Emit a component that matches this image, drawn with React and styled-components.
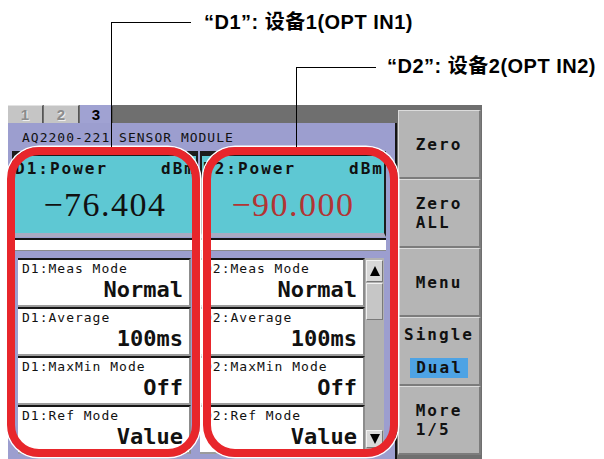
import React from "react";
import styled, { createGlobalStyle } from "styled-components";

const GlobalStyle = createGlobalStyle`
  html, body {
    margin: 0;
    padding: 0;
    background: #ffffff;
  }
  body {
    font-family: "Liberation Sans", Arial, sans-serif;
  }
  * {
    box-sizing: border-box;
  }
`;

const MONO = `"DejaVu Sans Mono", "Liberation Mono", monospace`;

const Figure = styled.div`
  position: relative;
  width: 604px;
  height: 459px;
  overflow: hidden;
  padding: 105px 0 0 8px;
`;

const Screen = styled.div`
  display: flex;
  gap: 1px;
  width: 474px;
  height: 354px;
  background: #6f6f6f;
`;

const MainPane = styled.div`
  width: 389px;
  display: flex;
  flex-direction: column;
`;

const TabBar = styled.div`
  display: flex;
  gap: 1px;
  height: 18px;
  background: #6f6f6f;
`;

const Tab = styled.div`
  width: ${({ $w }) => $w}px;
  height: 18px;
  display: flex;
  align-items: center;
  justify-content: center;
  font: bold 15px "Liberation Sans", Arial, sans-serif;
  background: ${({ $active }) => ($active ? "#a0a2d2" : "#c5c5c5")};
  color: ${({ $active }) => ($active ? "#000" : "#8c8c8c")};
  text-shadow: ${({ $active }) => ($active ? "none" : "1px 1px 0 #eeeeee")};
  border-top: 1px solid ${({ $active }) => ($active ? "#a0a2d2" : "#e2e2e2")};
  border-right: 1px solid #555;
`;

const Body = styled.div`
  flex: 1;
  background: #9c9ecf;
  border-right: 2px solid #141414;
  display: flex;
  flex-direction: column;
`;

const ModuleTitle = styled.div`
  height: 27px;
  padding: 8px 0 0 14px;
  font-family: ${MONO};
  font-size: 13px;
  line-height: 13px;
  letter-spacing: 1px;
  color: #111;
`;

const Columns = styled.div`
  display: flex;
  gap: 2px;
  padding-left: 4px;
`;

const Column = styled.div`
  width: 186px;
  display: flex;
  flex-direction: column;
`;

const Display = styled.div`
  height: 86px;
  margin-top: 1px;
  background: #5ec8d3;
  border-top: 5px solid #1c1c1c;
  border-left: 2px solid #1c1c1c;
  border-right: 2px solid #1c1c1c;
  border-bottom: 4px solid #a9aac2;
  display: flex;
  flex-direction: column;
`;

const PowerRow = styled.div`
  display: flex;
  justify-content: space-between;
  padding: 4px 0 0 1px;
  font-family: ${MONO};
  font-weight: bold;
  font-size: 16px;
  line-height: 18px;
  letter-spacing: 2px;
  color: #111;
`;

const PowerValue = styled.div`
  margin-top: 10px;
  text-align: center;
  font-family: "Liberation Serif", "Times New Roman", serif;
  font-size: 34px;
  line-height: 34px;
  letter-spacing: 1.5px;
  color: ${({ $color }) => $color};
`;

const SlotBar = styled.div`
  height: 13px;
  margin-top: 1px;
  background: #ffffff;
  border-top: 2px solid #161616;
  border-bottom: 1px solid #8a8a8a;
`;

const ListRow = styled.div`
  display: flex;
  margin-top: 7px;
  padding: 0 ${({ $padRight }) => $padRight}px 0 ${({ $padLeft }) => $padLeft}px;
`;

const ItemStack = styled.div`
  flex: 1;
  display: flex;
  flex-direction: column;
`;

const Item = styled.div`
  height: 49px;
  background: #ffffff;
  border-top: 2px solid #161616;
  border-bottom: 2px solid #9c9c9c;
  border-right: 2px solid #8c8c8c;
  padding: 2px 6px 0 4px;
  display: flex;
  flex-direction: column;
`;

const ItemLabel = styled.div`
  font-family: ${MONO};
  font-size: 13px;
  line-height: 13px;
  letter-spacing: 1px;
  color: #111;
  white-space: nowrap;
`;

const ItemValue = styled.div`
  margin-top: 4px;
  text-align: right;
  font-family: ${MONO};
  font-weight: bold;
  font-size: 22px;
  line-height: 22px;
  color: #111;
`;

const Scrollbar = styled.div`
  width: 19px;
  height: 192px;
  background: #b2b2b2;
  padding: 2px 1px;
  display: flex;
  flex-direction: column;
`;

const ScrollButton = styled.div`
  height: ${({ $h }) => $h}px;
  background: #d8d8d8;
  border-top: 1px solid #f2f2f2;
  border-left: 1px solid #f2f2f2;
  border-bottom: 1px solid #777;
  border-right: 1px solid #777;
  display: flex;
  align-items: center;
  justify-content: center;
`;

const Arrow = styled.span`
  width: 0;
  height: 0;
  border-left: 5px solid transparent;
  border-right: 5px solid transparent;
  ${({ $down }) =>
    $down ? "border-top: 10px solid #000;" : "border-bottom: 10px solid #000;"}
`;

const Thumb = styled.div`
  height: 37px;
  margin-top: 1px;
  background: #c6c6c6;
  border-top: 1px solid #f2f2f2;
  border-left: 1px solid #f2f2f2;
  border-bottom: 1px solid #7a7a7a;
  border-right: 1px solid #7a7a7a;
`;

const Track = styled.div`
  flex: 1;
`;

const ButtonColumn = styled.div`
  width: 84px;
  padding-top: 5px;
  display: flex;
  flex-direction: column;
`;

const SoftKey = styled.div`
  width: 83px;
  height: 69px;
  background: #b5b5b5;
  border-top: 1px solid #dcdcdc;
  border-left: 1px solid #dcdcdc;
  border-right: 2px solid #7c7c7c;
  border-bottom: 2px solid #7c7c7c;
  display: flex;
  flex-direction: column;
  align-items: center;
  justify-content: center;
  gap: ${({ $gap }) => $gap || 0}px;
  font-family: ${MONO};
  font-weight: bold;
  font-size: 16px;
  line-height: 19px;
  letter-spacing: 2px;
  color: #111;
`;

const KeyText = styled.div`
  text-align: left;
`;

const Selected = styled.div`
  height: 20px;
  padding: 0 5px 0 6px;
  line-height: 20px;
  background: #4ea3e4;
`;

const Highlight = styled.div`
  position: absolute;
  left: ${({ $left }) => $left}px;
  top: ${({ $top }) => $top}px;
  width: ${({ $width }) => $width}px;
  height: ${({ $height }) => $height}px;
  border: 8px solid #e8262b;
  border-radius: 32px;
  box-shadow: 0 0 0 1.5px #ffffff;
  pointer-events: none;
`;

const Leader = styled.div`
  position: absolute;
  left: ${({ $left }) => $left}px;
  top: ${({ $top }) => $top}px;
  width: ${({ $width }) => $width}px;
  height: ${({ $height }) => $height}px;
  border-top: 1.5px solid #000;
  border-left: 1.5px solid #000;
`;

const Callout = styled.div`
  position: absolute;
  left: ${({ $left }) => $left}px;
  top: ${({ $top }) => $top}px;
  font-family: "Liberation Sans", Arial, "Noto Sans CJK SC", sans-serif;
  font-weight: bold;
  font-size: 20px;
  line-height: 20px;
  letter-spacing: 0.5px;
  color: #000;
  white-space: nowrap;
`;

const channels = [
  {
    id: "D1",
    value: "−76.404",
    color: "#111",
    padLeft: 6,
    padRight: 7,
    scroll: false,
  },
  {
    id: "D2",
    value: "−90.000",
    color: "#b23434",
    padLeft: 0,
    padRight: 2,
    scroll: true,
  },
];

const settings = [
  ["Meas Mode", "Normal"],
  ["Average", "100ms"],
  ["MaxMin Mode", "Off"],
  ["Ref Mode", "Value"],
];

const ChannelColumn = ({ ch }) => (
  <Column>
    <Display>
      <PowerRow>
        <span>{ch.id}:Power</span>
        <span>dBm</span>
      </PowerRow>
      <PowerValue $color={ch.color}>{ch.value}</PowerValue>
    </Display>
    <SlotBar />
    <ListRow $padLeft={ch.padLeft} $padRight={ch.padRight}>
      <ItemStack>
        {settings.map(([label, value]) => (
          <Item key={label}>
            <ItemLabel>
              {ch.id}:{label}
            </ItemLabel>
            <ItemValue>{value}</ItemValue>
          </Item>
        ))}
      </ItemStack>
      {ch.scroll && (
        <Scrollbar>
          <ScrollButton $h={22}>
            <Arrow />
          </ScrollButton>
          <Thumb />
          <Track />
          <ScrollButton $h={18}>
            <Arrow $down />
          </ScrollButton>
        </Scrollbar>
      )}
    </ListRow>
  </Column>
);

export default function App() {
  return (
    <>
      <GlobalStyle />
      <Figure>
        <Screen>
          <MainPane>
            <TabBar>
              <Tab $w={35}>1</Tab>
              <Tab $w={35}>2</Tab>
              <Tab $w={33} $active>
                3
              </Tab>
            </TabBar>
            <Body>
              <ModuleTitle>AQ2200-221 SENSOR MODULE</ModuleTitle>
              <Columns>
                {channels.map((ch) => (
                  <ChannelColumn key={ch.id} ch={ch} />
                ))}
              </Columns>
            </Body>
          </MainPane>
          <ButtonColumn>
            <SoftKey>
              <KeyText>Zero</KeyText>
            </SoftKey>
            <SoftKey>
              <KeyText>
                Zero
                <br />
                ALL
              </KeyText>
            </SoftKey>
            <SoftKey>
              <KeyText>Menu</KeyText>
            </SoftKey>
            <SoftKey $gap={14}>
              <KeyText>Single</KeyText>
              <Selected>Dual</Selected>
            </SoftKey>
            <SoftKey>
              <KeyText>
                More
                <br />
                1/5
              </KeyText>
            </SoftKey>
          </ButtonColumn>
        </Screen>

        <Highlight $left={7} $top={147} $width={193} $height={310} />
        <Highlight $left={203} $top={147} $width={195} $height={310} />

        <Leader $left={111} $top={22} $width={80} $height={125} />
        <Leader $left={296} $top={67} $width={80} $height={80} />

        <Callout $left={204} $top={12}>
          “D1”: 设备1(OPT IN1)
        </Callout>
        <Callout $left={387} $top={56}>
          “D2”: 设备2(OPT IN2)
        </Callout>
      </Figure>
    </>
  );
}
